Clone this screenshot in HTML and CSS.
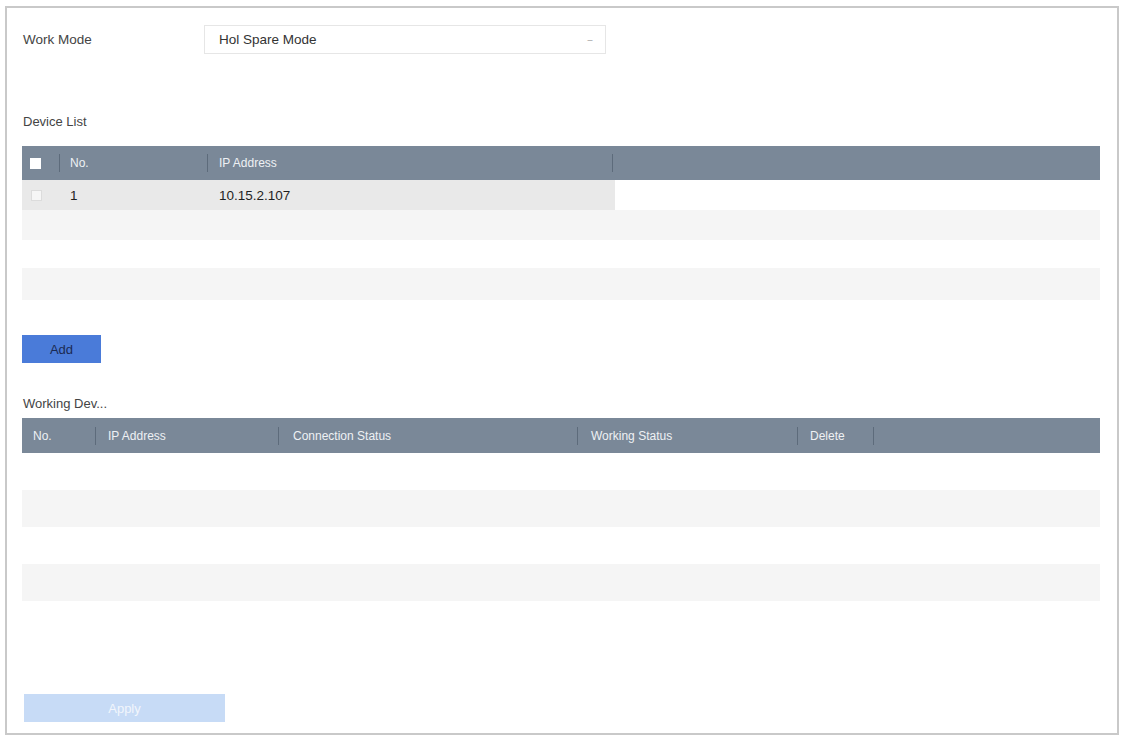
FILE: index.html
```html
<!DOCTYPE html>
<html>
<head>
<meta charset="utf-8">
<link rel="stylesheet" href="styles.css">
</head>
<body>
<div class="panel">
  <div class="mode-row">
    <div class="mode-label">Work Mode</div>
    <div class="select">
      <span class="select-text">Hol Spare Mode</span>
      <span class="select-arrow">&#8211;</span>
    </div>
  </div>

  <div class="section-title title-device">Device List</div>
  <div class="table">
    <div class="thead thead-dev">
      <div class="cell c-chk"><span class="chk chk-head"></span></div>
      <div class="cell c-no sep">No.</div>
      <div class="cell c-ip sep">IP Address</div>
      <div class="cell c-rest sep"></div>
    </div>
    <div class="trow trow-dev">
      <div class="cell c-chk filled"><span class="chk chk-row"></span></div>
      <div class="cell c-no filled">1</div>
      <div class="cell c-ip filled">10.15.2.107</div>
      <div class="cell c-rest"></div>
    </div>
    <div class="trow trow-dev alt"></div>
    <div class="trow trow-dev"></div>
    <div class="trow trow-dev alt"></div>
  </div>

  <div class="btn btn-add">Add</div>

  <div class="section-title title-work">Working Dev...</div>
  <div class="table">
    <div class="thead thead-work">
      <div class="cell w-no">No.</div>
      <div class="cell w-ip sep">IP Address</div>
      <div class="cell w-conn sep">Connection Status</div>
      <div class="cell w-stat sep">Working Status</div>
      <div class="cell w-del sep">Delete</div>
      <div class="cell w-rest sep"></div>
    </div>
    <div class="trow trow-work"></div>
    <div class="trow trow-work alt"></div>
    <div class="trow trow-work"></div>
    <div class="trow trow-work alt"></div>
  </div>

  <div class="btn btn-apply">Apply</div>
</div>
</body>
</html>
```

FILE: styles.css
```css
* { box-sizing: border-box; }
html, body { margin: 0; padding: 0; background: #ffffff; }
body {
  font-family: "Liberation Sans", Arial, sans-serif;
  font-size: 13px;
  color: #3a3a3a;
}

.panel {
  margin: 6px 4px 0 5px;
  height: 729px;
  border: 2px solid #c9c9c9;
  padding: 17px 17px 0 15px;
  display: flex;
  flex-direction: column;
}

.mode-row {
  display: flex;
  align-items: center;
  height: 29px;
}
.mode-label {
  width: 182px;
  padding-left: 1px;
  color: #444;
  font-size: 13.5px;
}
.select {
  width: 402px;
  height: 29px;
  border: 1px solid #e6e6e6;
  display: flex;
  align-items: center;
  justify-content: space-between;
  padding: 0 8px 0 14px;
}
.select-text { color: #333; font-size: 13.5px; }
.select-arrow {
  color: #9a9a9a;
  font-size: 9px;
  width: 14px;
  text-align: center;
}

.section-title {
  line-height: 14px;
  color: #444;
  padding-left: 1px;
}
.title-device { margin-top: 61px; }
.title-work { margin-top: 34px; }

.table { display: flex; flex-direction: column; }

.thead {
  display: flex;
  align-items: center;
  background: #7a8898;
  color: #eef1f4;
  font-size: 12px;
}
.thead-dev { height: 34px; margin-top: 17px; }
.thead-work { height: 35px; margin-top: 7px; }

.cell {
  display: flex;
  align-items: center;
  height: 100%;
  position: relative;
}
.sep::before {
  content: "";
  position: absolute;
  left: 0;
  top: 50%;
  margin-top: -9px;
  width: 1px;
  height: 18px;
  background: rgba(70, 84, 100, 0.55);
}

.c-chk { width: 37px; padding-left: 8px; }
.c-no { width: 148px; padding-left: 11px; }
.c-ip { width: 405px; padding-left: 12px; }
.c-rest { flex: 1; }

.chk {
  display: block;
  width: 11px;
  height: 11px;
}
.chk-head { background: #ffffff; }
.chk-row { background: #f6f6f6; border: 1px solid #dcdcdc; margin-left: 1px; }

.trow { display: flex; }
.trow-dev { height: 30px; }
.trow-dev:nth-child(4) { height: 28px; }
.trow-dev:nth-child(5) { height: 32px; }
.trow-work { height: 37px; }
.alt { background: #f5f5f5; }

.trow .c-no, .trow .c-ip { color: #1f1f1f; font-size: 13.5px; }
.trow .c-ip { padding-left: 12px; }
.filled { background: #e9e9e9; }
.trow-dev .c-ip { width: 408px; }

.w-no { width: 73px; padding-left: 11px; }
.w-ip { width: 183px; padding-left: 13px; }
.w-conn { width: 299px; padding-left: 15px; }
.w-stat { width: 220px; padding-left: 14px; }
.w-del { width: 76px; padding-left: 13px; }
.w-rest { flex: 1; }

.btn {
  display: flex;
  align-items: center;
  justify-content: center;
  height: 28px;
}
.btn-add {
  width: 79px;
  margin-top: 35px;
  background: #4a7bd9;
  color: #1b2a52;
  font-size: 13px;
}
.btn-apply {
  width: 201px;
  margin-top: 93px;
  margin-left: 2px;
  background: #c7dbf6;
  color: #f2f6fc;
}
```
